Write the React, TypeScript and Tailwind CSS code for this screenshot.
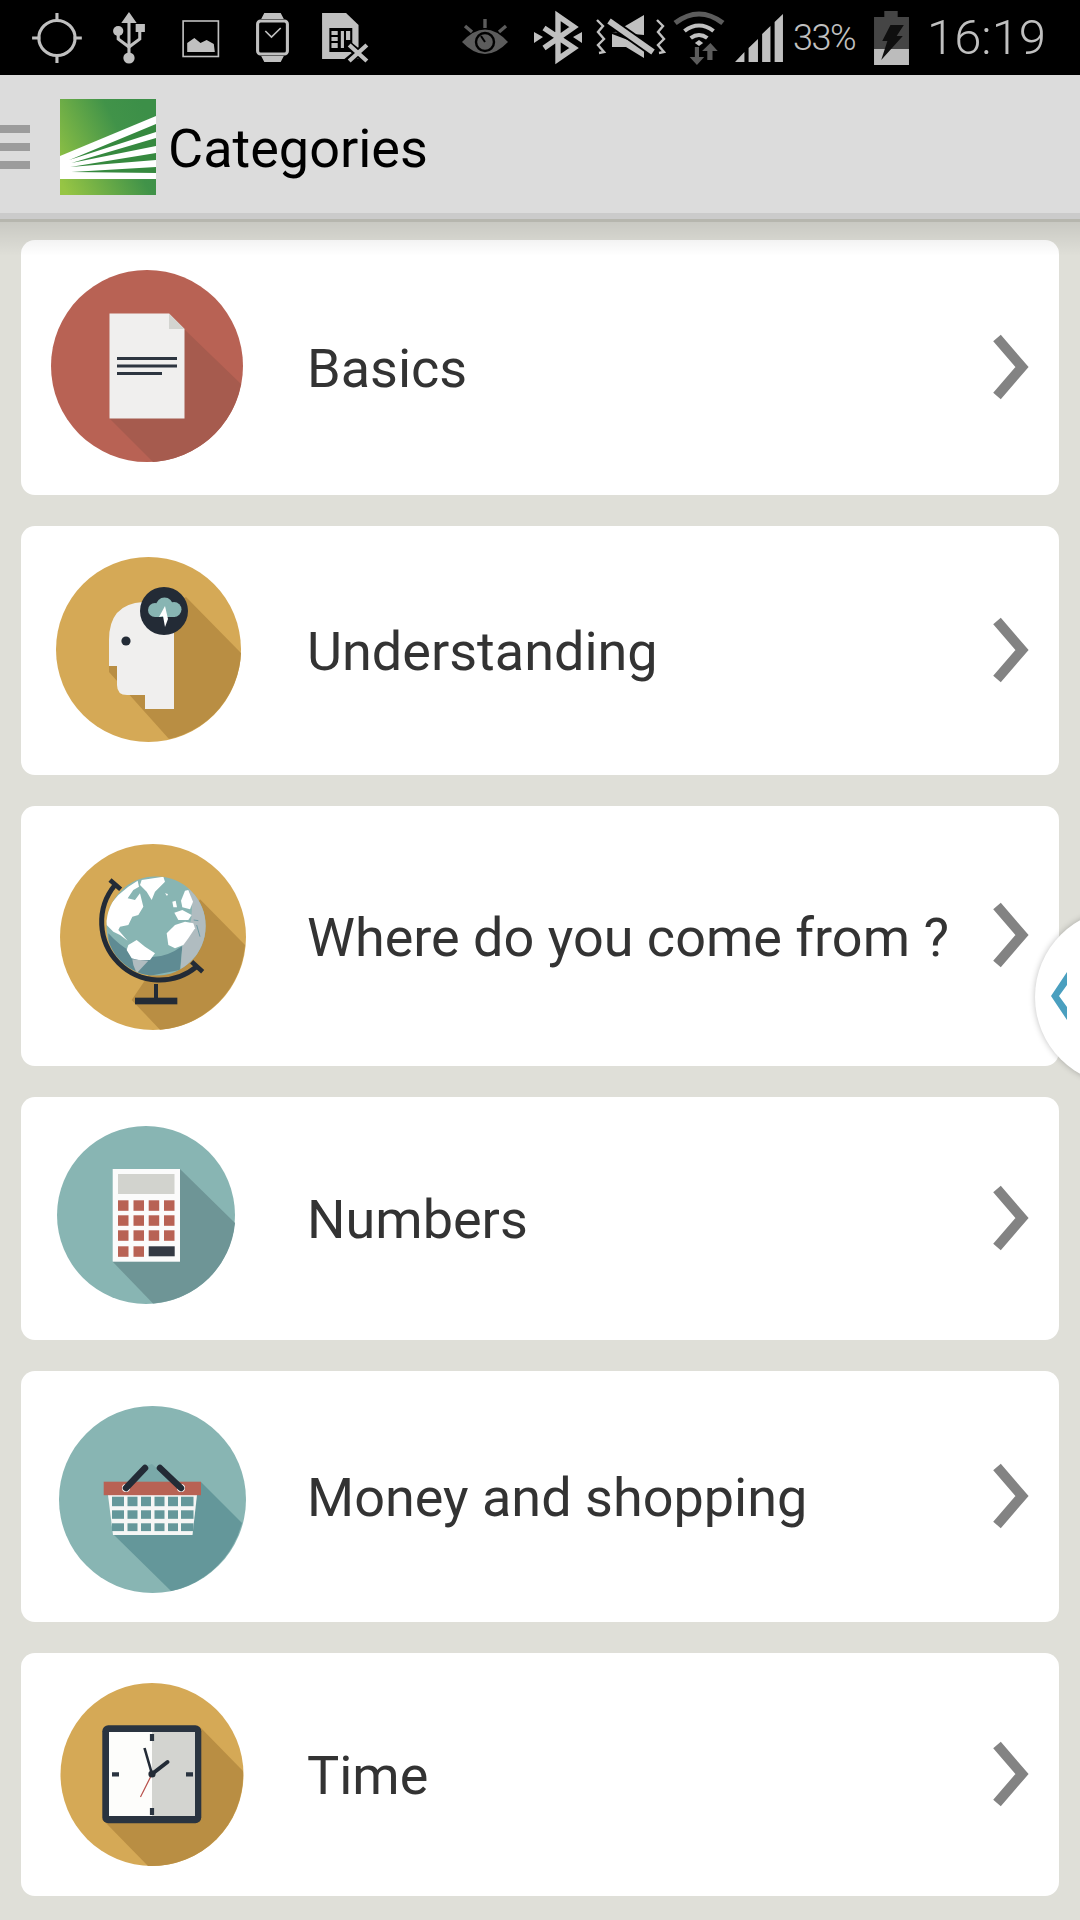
import type { ReactNode } from 'react';

const gray = '#c0c0c0';
const dim = '#5c5c5c';
const dark = '#232b36';
const white = '#f0efee';
const red = '#b86254';
const gold = '#d5a956';
const goldShade = '#b98e43';
const teal = '#88b5b3';

function LocationIcon() {
  return (
    <svg viewBox="28 10 56 56" className="ml-[29px] h-[56px] w-[58px]" preserveAspectRatio="none" fill="none" stroke={gray}>
      <circle cx="55" cy="38" r="17.5" strokeWidth="3" />
      <path d="M55 13v8M55 55v8M31 38h8M71 38h8" strokeWidth="3" />
    </svg>
  );
}

function UsbIcon() {
  return (
    <svg viewBox="106 10 38 56" className="ml-[23px] h-[56px] w-[39px]" preserveAspectRatio="none" fill={gray}>
      <path d="M124.5 12l7.5 11h-6v30h-3V23h-6z" />
      <circle cx="114" cy="31" r="5" />
      <rect x="131" y="24" width="9" height="8" />
      <path d="M114 33v6l10.5 8 10.5-8v-7" fill="none" stroke={gray} strokeWidth="3" />
      <circle cx="124.5" cy="58" r="5.5" />
    </svg>
  );
}

function ImageIcon() {
  return (
    <svg viewBox="172 15 44 44" className="ml-[29px] h-[44px] w-[45px] self-center" preserveAspectRatio="none" fill={gray}>
      <rect x="177" y="20" width="34.5" height="35.5" fill="none" stroke={gray} strokeWidth="1.6" />
      <path d="M181 51v-9l7-5 6 5 6-3 7 4 1 8z" />
    </svg>
  );
}

function WatchIcon() {
  return (
    <svg viewBox="246 11 36 54" className="ml-[31px] h-[54px] w-[37px]" preserveAspectRatio="none">
      <path d="M256 13h16l3 6h-22zM253 56h22l-3 6h-16z" fill={gray} />
      <rect x="249.5" y="21" width="29" height="33" rx="3" fill="none" stroke={gray} strokeWidth="3" />
      <path d="M257 31l6 6 9-9" fill="none" stroke={gray} strokeWidth="1.6" />
    </svg>
  );
}

function SimOffIcon() {
  return (
    <svg viewBox="310 11 48 54" className="ml-[29px] h-[54px] w-[50px]" preserveAspectRatio="none">
      <path d="M312 13h23l12 12v34h-35z" fill={gray} />
      <rect x="319" y="28" width="22" height="24" fill="#000" />
      <path d="M321 31h6v4h-6zM321 37h6v4h-6zM321 43h6v5h-6zM330 31h3v17h-3zM335 31h4v9h-4z" fill={gray} />
      <path d="M336 44l21 18M357 44l-21 18" stroke="#000" strokeWidth="8" />
      <path d="M338 45l17 16M355 45l-17 16" stroke={gray} strokeWidth="4" />
    </svg>
  );
}

function EyeIcon() {
  return (
    <svg viewBox="460 16 50 44" className="ml-[90px] h-[44px] w-[50px]" fill={dim}>
      <path d="M462 42q23-25 46 0-23 24-46 0z" />
      <circle cx="485" cy="42" r="9" fill="none" stroke="#000" strokeWidth="2.4" />
      <path d="M485 42l-4-6" stroke="#000" strokeWidth="2" />
      <path d="M485 19v9M465 26l7 6M506 26l-7 6" stroke={dim} strokeWidth="3.4" />
    </svg>
  );
}

function BluetoothIcon() {
  return (
    <svg viewBox="530 10 56 56" className="ml-[20px] h-[56px] w-[56px]" fill={gray}>
      <path d="M534 32l9 5-9 6zM582 32l-9 5 9 6z" />
      <path d="M544 28l30 20-16 11V16l16 11-30 21" fill="none" stroke={gray} strokeWidth="5.4" />
    </svg>
  );
}

function VibrateMuteIcon() {
  return (
    <svg viewBox="594 12 72 52" className="ml-[8px] h-[52px] w-[72px]" fill={gray}>
      <path d="M612 32h3l29-17v20zM612 34v13h14l18 11V46z" />
      <path d="M609 21l44 31" stroke="#000" strokeWidth="10" />
      <path d="M609 21l44 31" stroke={gray} strokeWidth="6" />
      <path d="M597 20l6 6-5 6 6 7-6 6 6 7-5 1M657 20l6 6-5 6 6 7-6 6 6 7-5 1" fill="none" stroke={gray} strokeWidth="2.4" />
    </svg>
  );
}

function WifiIcon() {
  return (
    <svg viewBox="668 8 52 56" className="ml-[6px] h-[56px] w-[54px]" preserveAspectRatio="none" fill="none">
      <path d="M671 21q23-18 46 0" stroke={dim} strokeWidth="5" />
      <path d="M680 29q14-11 28 0M686 36q8-6 16 0" stroke={gray} strokeWidth="4" />
      <path d="M690 41l4-3 4 3-4 3z" fill={gray} />
      <path d="M690 45h4v10h5l-7 8-7-8h5z" fill={dim} />
      <path d="M702 58V49h-5l8-8 7 8h-5v9z" fill={dim} />
    </svg>
  );
}

function SignalIcon() {
  return (
    <svg viewBox="728 12 48 50" className="ml-[8px] h-[50px] w-[50px]" preserveAspectRatio="none" fill={gray}>
      <path d="M729 61l9-10v10zM742 61V47l9-9v23zM755 61V33l8-8v36zM767 61V21l8-8v48z" />
    </svg>
  );
}

function BatteryIcon() {
  return (
    <svg viewBox="862 8 36 56" className="h-[56px] w-[37px]" preserveAspectRatio="none">
      <path d="M873 9h13v6h11v32h-34V15h10z" fill="#454545" />
      <rect x="863" y="47" width="34" height="16" fill="#bcbcbc" />
      <path d="M879 23h13l-7 11h6l-21 24 6-19h-5z" fill="#0f0f0f" />
    </svg>
  );
}

function Logo() {
  return (
    <svg viewBox="58 99 93 96" className="ml-[30px] h-[96px] w-[96px]" preserveAspectRatio="none">
      <defs>
        <linearGradient id="logoGreen" x1="0" y1="0.85" x2="1" y2="0.35">
          <stop offset="0" stopColor="#96c544" />
          <stop offset="0.7" stopColor="#419349" />
          <stop offset="1" stopColor="#3c8f48" />
        </linearGradient>
      </defs>
      <rect x="58" y="99" width="93" height="96" fill="url(#logoGreen)" />
      <path d="M58 156l93-40v63H58z" fill="#fff" />
      <path
        d="M67 160l84-36v8zM69 163l82-25v8zM68 167l83-14v7zM69 172l82-5v6z"
        fill="#36893f"
      />
    </svg>
  );
}

function Shade({ d, fill }: { d: string; fill: string }) {
  return <path d={d} fill={fill} />;
}

function BasicsIcon() {
  return (
    <svg viewBox="51 270 192 192" className="-mt-[3px] ml-[30px] h-[192px] w-[192px]">
      <circle cx="147" cy="366" r="96" fill={red} />
      <Shade d="M184 329L241 384A96 96 0 0 1 153 462L109 418z" fill="#a65b4e" />
      <path d="M109.5 313.5H169L184.5 329V418.5H109.5z" fill={white} />
      <path d="M169 313.5L184.5 329H169z" fill="#d3d4d0" />
      <path d="M117 358.5h60M117 366h60M117 373.5h45" stroke="#2d3540" strokeWidth="3.2" />
    </svg>
  );
}

function UnderstandingIcon() {
  return (
    <svg viewBox="56 557 185 185" className="-mt-[2px] ml-[35px] h-[185px] w-[185px]">
      <circle cx="148.5" cy="649.5" r="92.5" fill={gold} />
      <Shade d="M186 597L241 653A92.5 92.5 0 0 1 169 739L109 672V640z" fill={goldShade} />
      <path
        d="M174 602H143Q109 604 109 640V666H117V685Q117 695 127 695H145V709H174z"
        fill={white}
      />
      <circle cx="126" cy="641" r="4.6" fill={dark} />
      <circle cx="164" cy="611" r="24" fill={dark} />
      <g fill={teal}>
        <circle cx="155" cy="610" r="7" />
        <circle cx="164.5" cy="606" r="8.5" />
        <circle cx="174" cy="609.5" r="7.5" />
        <rect x="155" y="607" width="20" height="10" />
      </g>
      <path d="M165 606l3 13-3 8-2-11-4 1z" fill="#fff" />
    </svg>
  );
}

function GlobeIcon() {
  return (
    <svg viewBox="180 102 558 558" className="mt-[2px] ml-[39px] h-[186px] w-[186px]">
      <defs>
        <clipPath id="globeClip">
          <circle cx="183" cy="168" r="149" />
        </clipPath>
      </defs>
      <circle cx="459" cy="381" r="279" fill={gold} />
      <Shade d="M600 268L735 405A279 279 0 0 1 480 659L395 570z" fill={goldShade} />
      <g transform="translate(285 180)">
        <g clipPath="url(#globeClip)">
          <rect x="34" y="19" width="298" height="298" fill={teal} />
          <path d="M40 190Q150 310 262 228L255 300 150 320 40 300z" fill="#5f8b93" />
          <path d="M275 40Q312 130 262 228L255 320H340V40z" fill="#b0bcc0" />
          <path d="M140 30L205 20 210 35 180 65 170 90 155 65 135 45z" fill="#fff" />
          <path d="M40 110L70 75 100 50 128 32 132 50 115 60 98 85 120 90 135 70 145 110 130 135 112 140 100 165 75 170 70 180 98 212 75 195 55 185 35 165 30 135z" fill="#fff" />
          <path d="M100 225L125 210 150 230 180 250 165 270 130 270 110 265 95 240z" fill="#fff" />
          <path d="M112 268L160 272 125 310 115 285z" fill="#b0bcc0" />
          <path d="M215 190L240 165 270 155 295 160 300 175 280 205 265 225 240 235 220 225z" fill="#fff" />
          <path d="M270 62L280 60 294 95 285 118 262 112 258 92z" fill="#fff" />
          <path d="M232 95L242 92 246 112 235 112z" fill="#fff" />
          <path d="M238 128L262 120 290 135 280 150 250 150z" fill="#fff" />
          <path d="M210 70l9 2-3 6z" fill="#fff" />
          <path d="M296 150l14 2M305 165l10 35" stroke="#6e9aa3" strokeWidth="3" fill="none" />
        </g>
      </g>
      <path d="M345 225A174 174 0 0 0 590 470" fill="none" stroke={dark} strokeWidth="15" />
      <path d="M330 210L362 238M575 455L608 485" stroke={dark} strokeWidth="14" />
      <path d="M468 522V570" stroke={dark} strokeWidth="12" />
      <rect x="405" y="563" width="127" height="20" fill={dark} />
    </svg>
  );
}

function NumbersIcon() {
  const cols = [118, 133.5, 148.7, 164];
  const rows = [1200.3, 1215.3, 1230.3];
  return (
    <svg viewBox="57 1126 178 178" className="-mt-[7px] ml-[36px] h-[178px] w-[178px]">
      <circle cx="146" cy="1215" r="89" fill={teal} />
      <Shade d="M180 1169L235 1223A89 89 0 0 1 153 1303.5L112.7 1261.7z" fill="#6e9596" />
      <rect x="112.7" y="1169" width="67.3" height="92.7" fill="#fbfbfb" />
      <rect x="118" y="1174" width="56.5" height="20" fill="#d2d3ce" />
      {rows.flatMap((y) =>
        cols.map((x) => <rect key={`${x}-${y}`} x={x} y={y} width="10.5" height="10.5" fill={red} />)
      )}
      <rect x="118" y="1246.3" width="10.5" height="10.5" fill={red} />
      <rect x="133.5" y="1246.3" width="10.5" height="10.5" fill={red} />
      <rect x="148.7" y="1246.3" width="26" height="10" fill="#343a44" />
    </svg>
  );
}

function ShoppingIcon() {
  const cols = [
    [112, 12],
    [127.5, 10],
    [141, 10],
    [154.5, 10],
    [168, 10],
    [181, 12.5],
  ];
  const rows = [
    [1495.7, 9.5],
    [1509.3, 8.5],
    [1522.3, 7.8],
  ];
  return (
    <svg viewBox="59 1405 187 187" className="mt-[5px] ml-[38px] h-[187px] w-[187px]">
      <circle cx="152.5" cy="1498.5" r="93.5" fill={teal} />
      <Shade d="M201 1481L242 1522A93.5 93.5 0 0 1 171 1590L113 1533z" fill="#64979a" />
      <path d="M146 1465L152 1463 172 1481H128z" fill="#7aa9a9" />
      <path d="M108 1494H197L192.5 1534H113z" fill="#f5f6f5" />
      {rows.flatMap(([y, h]) =>
        cols.map(([x, w]) => <rect key={`${x}-${y}`} x={x} y={y} width={w} height={h} fill="#64979a" />)
      )}
      <rect x="103.7" y="1480.7" width="97.3" height="13.5" fill={red} />
      <circle cx="126" cy="1487" r="4" fill="#fff" />
      <circle cx="181" cy="1487" r="4" fill="#fff" />
      <path d="M126 1487L145 1467M181 1487L160 1467" stroke={dark} strokeWidth="6.5" strokeLinecap="round" />
    </svg>
  );
}

function TimeIcon() {
  return (
    <svg viewBox="60 1684 184 184" className="mt-[1px] ml-[39px] h-[184px] w-[184px]">
      <circle cx="152" cy="1775.5" r="91.5" fill={gold} />
      <Shade d="M200 1728L243 1772A91.5 91.5 0 0 1 148 1867L102 1820z" fill={goldShade} />
      <rect x="102.3" y="1726.3" width="99" height="98" rx="6" fill="#2a3440" />
      <rect x="109" y="1733" width="43" height="84" fill="#fdfdfb" />
      <rect x="152" y="1733" width="43" height="84" fill="#d3d4d0" />
      <path d="M152 1735v7M152 1809v7M112 1775.3h7M186 1775.3h7" stroke="#2a3440" strokeWidth="4.2" />
      <path d="M152 1775L140.5 1798" stroke="#b8504a" strokeWidth="1.2" />
      <path d="M152 1775L144.5 1749" stroke={dark} strokeWidth="2.6" />
      <path d="M152 1775L167.5 1763" stroke={dark} strokeWidth="4" strokeLinecap="round" />
      <circle cx="152" cy="1775" r="3.6" fill={dark} />
    </svg>
  );
}

function Chevron() {
  return (
    <svg viewBox="0 0 36 68" className="h-[68px] w-[36px]" fill="none" stroke="#838383" strokeWidth="10">
      <path d="M4 5L29 34L4 63" />
    </svg>
  );
}

function CategoryRow({ height, label, icon }: { height: string; label: string; icon: ReactNode }) {
  return (
    <div className={`flex items-center rounded-[14px] bg-white ${height}`}>
      <div className="flex w-[286px] shrink-0 items-center">{icon}</div>
      <span className="flex-1 pt-[3px] text-[54px] leading-none text-[#333]">{label}</span>
      <span className="mr-[30px] -mt-[2px] shrink-0">
        <Chevron />
      </span>
    </div>
  );
}

export default function App() {
  return (
    <div className="relative h-[1920px] w-[1080px] overflow-hidden bg-[#dfdfd8] font-['Roboto',sans-serif]">
      <div className="flex h-[75px] items-center bg-black text-[#c0c0c0]">
        <LocationIcon />
        <UsbIcon />
        <ImageIcon />
        <WatchIcon />
        <SimOffIcon />
        <EyeIcon />
        <BluetoothIcon />
        <VibrateMuteIcon />
        <WifiIcon />
        <SignalIcon />
        <span className="ml-[9px] w-[80px] text-[36px] font-light tracking-[-1.5px]">33%</span>
        <BatteryIcon />
        <span className="ml-[17px] text-[49px] font-light">16:19</span>
      </div>

      <header className="flex h-[147px] items-center border-b-[3px] border-[#b6b6ae] bg-[#dcdcdc] shadow-[inset_0_-6px_0_#cbcbcb]">
        <div className="flex w-[30px] flex-col gap-[10px]">
          <span className="h-[8px] bg-[#9c9c9c]" />
          <span className="h-[8px] bg-[#9c9c9c]" />
          <span className="h-[8px] bg-[#9c9c9c]" />
        </div>
        <Logo />
        <h1 className="ml-[12px] pt-[2px] text-[54px] font-normal text-black">Categories</h1>
      </header>

      <div className="flex flex-col gap-[31px] px-[21px] pt-[18px]">
        <CategoryRow height="h-[255px]" label="Basics" icon={<BasicsIcon />} />
        <CategoryRow height="h-[249px]" label="Understanding" icon={<UnderstandingIcon />} />
        <CategoryRow height="h-[260px]" label="Where do you come from ?" icon={<GlobeIcon />} />
        <CategoryRow height="h-[243px]" label="Numbers" icon={<NumbersIcon />} />
        <CategoryRow height="h-[251px]" label="Money and shopping" icon={<ShoppingIcon />} />
        <CategoryRow height="h-[243px]" label="Time" icon={<TimeIcon />} />
      </div>

      <div className="pointer-events-none absolute inset-x-0 top-[222px] h-[34px] bg-gradient-to-b from-black/10 to-transparent" />

      <div className="absolute left-[1035px] top-[909px] h-[176px] w-[176px] rounded-full bg-white shadow-[0_0_6px_rgba(0,0,0,0.25)]">
        <svg viewBox="0 0 20 50" className="absolute left-[16px] top-[63px] h-[50px] w-[20px]" fill="#4a9fbf">
          <path d="M0 24L16 0V13L8 24L16 35V48z" />
        </svg>
      </div>
    </div>
  );
}
